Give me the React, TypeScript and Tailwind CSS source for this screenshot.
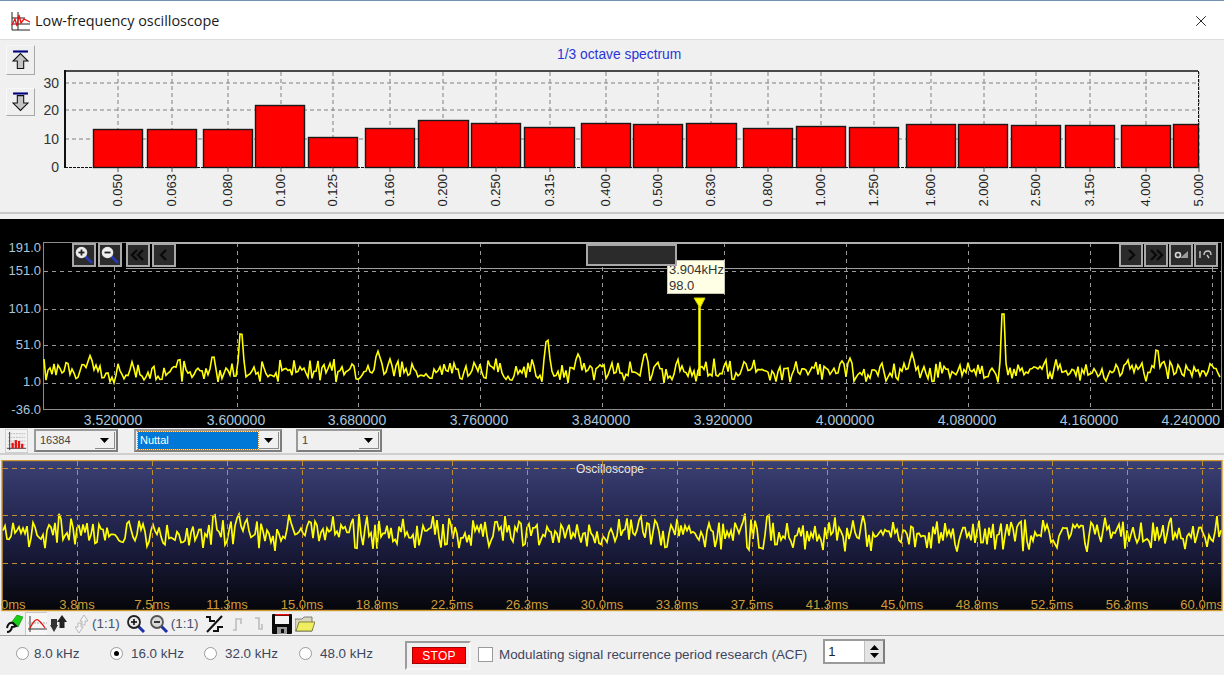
import { X } from "lucide-react"

// deterministic noise so the traces stay put between runs
const rng = (seed: number) => () => {
  seed = (seed + 0x6d2b79f5) | 0
  let t = Math.imul(seed ^ (seed >>> 15), 1 | seed)
  t = (t + Math.imul(t ^ (t >>> 7), 61 | t)) ^ t
  return ((t ^ (t >>> 14)) >>> 0) / 4294967296
}

const trace = (seed: number, x0: number, x1: number, step: number, base: number, amp: number, peaks: [number, number, number][]) => {
  const r = rng(seed)
  const pts: string[] = []
  for (let x = x0; x <= x1; x += step) {
    let y = base + (r() - 0.5) * amp + (r() - 0.5) * amp * 0.7
    for (const [px, h, w] of peaks) {
      const d = Math.max(0, Math.abs(x - px) - step / 2)
      if (d < w) y = Math.min(y, base + 4 - h * (1 - d / w) + (r() - 0.5) * 3)
    }
    pts.push(`${x.toFixed(1)},${y.toFixed(1)}`)
  }
  return pts.join(" ")
}

const bars: [number, number, number, string, number][] = [
  [93, 142, 129, "0.050", 118],
  [147, 196, 129, "0.063", 172],
  [203, 252, 129, "0.080", 228],
  [255, 304, 105, "0.100", 281],
  [308, 357, 137, "0.125", 333],
  [365, 414, 128, "0.160", 390],
  [418, 468, 120, "0.200", 443],
  [471, 520, 123, "0.250", 496],
  [524, 574, 127, "0.315", 550],
  [581, 630, 123, "0.400", 606],
  [633, 682, 124, "0.500", 658],
  [686, 736, 123, "0.630", 711],
  [743, 792, 128, "0.800", 768],
  [796, 845, 126, "1.000", 821],
  [849, 898, 127, "1.250", 874],
  [906, 955, 124, "1.600", 931],
  [958, 1007, 124, "2.000", 984],
  [1011, 1060, 125, "2.500", 1036],
  [1065, 1114, 125, "3.150", 1090],
  [1121, 1170, 125, "4.000", 1146],
  [1173, 1198, 124, "5.000", 1199],
]

const SpectrumChart = () => (
  <svg viewBox="43 40 1181 174" className="w-[1181px] h-[174px] block">
    {[83, 110, 139].map((y) => (
      <line key={y} x1={65} x2={1198} y1={y} y2={y} stroke="#808080" strokeDasharray="4 3" />
    ))}
    {bars.map((b) => (
      <line key={b[3]} x1={b[4]} x2={b[4]} y1={72} y2={167} stroke="#808080" strokeDasharray="4 3" />
    ))}
    {bars.map(([a, b, top, label, tx]) => (
      <g key={label}>
        <rect x={a + 0.5} y={top + 0.5} width={b - a} height={167 - top} fill="#ff0000" stroke="#1a1a1a" strokeWidth={1.4} />
        <line x1={tx} x2={tx} y1={167} y2={172} stroke="#555" />
        <text x={tx + 4} y={174} textAnchor="end" transform={`rotate(-90 ${tx + 4} 174)`} fontSize={13} fill="#222">
          {label}
        </text>
      </g>
    ))}
    <line x1={65} x2={1198} y1={71} y2={71} stroke="#111" strokeWidth={1.5} />
    <line x1={65} x2={65} y1={70} y2={168} stroke="#111" strokeWidth={2} />
    <line x1={65} x2={1198} y1={167.5} y2={167.5} stroke="#111" strokeDasharray="3 1" />
    <line x1={1198.5} x2={1198.5} y1={71} y2={167} stroke="#111" strokeDasharray="3 1" />
    {[
      ["30", 88],
      ["20", 115],
      ["10", 144],
      ["0", 172],
    ].map(([t, y]) => (
      <text key={t} x={59} y={y} textAnchor="end" fontSize={14} fill="#333">
        {t}
      </text>
    ))}
  </svg>
)

const freqGrid = [114, 237, 358, 480, 602, 724, 846, 968, 1090, 1212]
const freqLabels = ["3.520000", "3.600000", "3.680000", "3.760000", "3.840000", "3.920000", "4.000000", "4.080000", "4.160000", "4.240000"]
const ampLabels: [string, number][] = [
  ["191.0", 252],
  ["151.0", 275],
  ["101.0", 313],
  ["51.0", 349],
  ["1.0", 386],
  ["-36.0", 414],
]

const fftTrace = trace(7, 44, 1220, 2, 371, 15, [
  [90, 20, 3],
  [213, 18, 3],
  [241, 42, 3],
  [378, 24, 4],
  [390, 16, 3],
  [547, 34, 4],
  [578, 22, 4],
  [645, 20, 3],
  [912, 22, 3],
  [1003, 61, 2.5],
  [1157, 24, 3],
  [850, 18, 2.5],
])

const FftChart = () => (
  <svg viewBox="0 219 1224 209" className="w-[1224px] h-[209px] block">
    <rect x={0} y={219} width={1224} height={209} fill="#000" />
    {[271, 309, 345, 383].map((y) => (
      <line key={y} x1={44} x2={1221} y1={y + 0.5} y2={y + 0.5} stroke="#9a9a9a" strokeDasharray="4 4" />
    ))}
    {freqGrid.map((x) => (
      <line key={x} x1={x + 0.5} x2={x + 0.5} y1={243} y2={409} stroke="#9a9a9a" strokeDasharray="4 4" />
    ))}
    <rect x={43.5} y={242.5} width={1178} height={167} fill="none" stroke="#8c8c8c" />
    <line x1={126} x2={1218} y1={268.5} y2={268.5} stroke="#a0a0a0" />
    <polyline points={fftTrace} fill="none" stroke="#ffff00" strokeWidth={1.6} />
    <line x1={699.5} x2={699.5} y1={306} y2={376} stroke="#ffff00" strokeWidth={2.5} />
    <polygon points="694,298 705,298 700,308" fill="#ffff00" stroke="#c8c800" />
    {ampLabels.map(([t, y]) => (
      <text key={t} x={41} y={y} textAnchor="end" fontSize={13} fill="#a9c6dc">
        {t}
      </text>
    ))}
    {freqLabels.map((t, i) =>
      i === 9 ? (
        <text key={t} x={1220} y={425} textAnchor="end" fontSize={14} fill="#a9c6dc">
          {t}
        </text>
      ) : (
        <text key={t} x={freqGrid[i] - 1} y={425} textAnchor="middle" fontSize={14} fill="#a9c6dc">
          {t}
        </text>
      ),
    )}
  </svg>
)

const NavBtn = ({ children }: { children: React.ReactNode }) => (
  <div className="w-6 h-6 bg-[#2b2b2b] border-2 border-[#a8a8a8] flex items-center justify-center shrink-0">{children}</div>
)

const Lens = ({ plus }: { plus: boolean }) => (
  <svg width="20" height="20" viewBox="0 0 20 20">
    <line x1="11" y1="11" x2="18" y2="18" stroke="#2438b8" strokeWidth="2.5" />
    <circle cx="7.5" cy="7.5" r="5" fill="#f2f2f2" stroke="#e8e8e8" strokeWidth="1.6" />
    <line x1="4.5" y1="7.5" x2="10.5" y2="7.5" stroke="#222" strokeWidth="1.8" />
    {plus && <line x1="7.5" y1="4.5" x2="7.5" y2="10.5" stroke="#222" strokeWidth="1.8" />}
  </svg>
)

const Chev = ({ dir, double }: { dir: "l" | "r"; double?: boolean }) => (
  <svg width="16" height="14" viewBox="0 0 16 14" fill="none" stroke="#0a0a0a" strokeWidth="2.4">
    {dir === "l" ? (
      <>
        <path d={double ? "M7 2 L2 7 L7 12" : "M10 2 L5 7 L10 12"} />
        {double && <path d="M13 2 L8 7 L13 12" />}
      </>
    ) : (
      <>
        <path d={double ? "M3 2 L8 7 L3 12" : "M6 2 L11 7 L6 12"} />
        {double && <path d="M9 2 L14 7 L9 12" />}
      </>
    )}
  </svg>
)

const NavBand = () => (
  <div className="absolute left-[44px] top-[23px] w-[1177px] h-[26px]">
    <div className="absolute left-[82px] right-[3px] top-0 h-[2px] bg-[#b0b0b0]" />
    <div className="relative flex items-center h-full pl-[28px]">
      <div className="flex gap-[2px]">
        <NavBtn><Lens plus /></NavBtn>
        <NavBtn><Lens plus={false} /></NavBtn>
      </div>
      <div className="flex gap-[2px] ml-[4px]">
        <NavBtn><Chev dir="l" double /></NavBtn>
        <NavBtn><Chev dir="l" /></NavBtn>
      </div>
      <div className="ml-[410px] w-[91px] h-[22px] bg-[#2b2b2b] border-2 border-[#a8a8a8]" />
      <div className="ml-auto flex gap-[1px] mr-[3px]">
        <NavBtn><Chev dir="r" /></NavBtn>
        <NavBtn><Chev dir="r" double /></NavBtn>
        <NavBtn>
          <svg width="16" height="12" viewBox="0 0 16 12" fill="none">
            <circle cx="5" cy="6" r="2.5" stroke="#d8d8d8" strokeWidth="1.6" />
            <path d="M7 9 L15 9 L15 2 Z" fill="#9a9a9a" />
          </svg>
        </NavBtn>
        <NavBtn>
          <svg width="16" height="12" viewBox="0 0 16 12" fill="none" stroke="#c8c8c8" strokeWidth="1.4">
            <path d="M2 2 V9" />
            <path d="M6 6 Q6 2 10 2 Q13 2 13 6" />
            <path d="M9 6 L11 9" />
          </svg>
        </NavBtn>
      </div>
    </div>
  </div>
)

const WinSelect = ({ width, value, selected }: { width: string; value: string; selected?: boolean }) => (
  <div className={`${width} h-[23px] flex items-center bg-[#f0f0f0] border-2 border-[#9a9a9a] border-r-[#7d7d7d] border-b-[#7d7d7d] pr-[1px]`}>
    <div className="flex-1 min-w-0 pl-[2px] h-full py-[1px]">
      <div
        className={
          selected
            ? "h-full bg-[#0078d7] text-white outline-1 outline-dotted outline-[#c87a28] pl-[2px] text-[11px] leading-[17px]"
            : "h-full text-[#444] pl-[2px] text-[11px] leading-[17px]"
        }
      >
        {value}
      </div>
    </div>
    <div className="w-[20px] h-[17px] ml-[1px] bg-[#f0f0f0] border-r border-b border-[#8a8a8a] flex items-center justify-center">
      <svg width="9" height="5" viewBox="0 0 9 5">
        <polygon points="0,0 9,0 4.5,5" fill="#000" />
      </svg>
    </div>
  </div>
)

const ControlsRow = () => (
  <div className="h-[27px] shrink-0 flex items-center pl-[5px] border-b-2 border-[#cfcfcf]">
    <svg width="23" height="24" viewBox="0 0 23 24" className="bg-[#f2f2f2] border border-[#d0d0d0]">
      {[4, 8, 12, 16].map((y) => (
        <line key={y} x1="2" x2="21" y1={y} y2={y} stroke="#b5b5b5" strokeDasharray="2 1" />
      ))}
      <line x1="4" x2="4" y1="2" y2="22" stroke="#333" />
      <line x1="1" x2="22" y1="20" y2="20" stroke="#333" />
      <rect x="6" y="14" width="2.5" height="6" fill="#e81010" />
      <rect x="9.5" y="11" width="2.5" height="9" fill="#e81010" />
      <rect x="13" y="12" width="2.5" height="8" fill="#e81010" />
      <rect x="16.5" y="15" width="2.5" height="5" fill="#e81010" />
    </svg>
    <div className="ml-[6px]"><WinSelect width="w-[84px]" value="16384" /></div>
    <div className="ml-[16px]"><WinSelect width="w-[148px]" value="Nuttal" selected /></div>
    <div className="ml-[14px]"><WinSelect width="w-[86px]" value="1" /></div>
  </div>
)

const msLabels = ["0ms", "3.8ms", "7.5ms", "11.3ms", "15.0ms", "18.8ms", "22.5ms", "26.3ms", "30.0ms", "33.8ms", "37.5ms", "41.3ms", "45.0ms", "48.8ms", "52.5ms", "56.3ms", "60.0ms"]
const scopeTrace = trace(21, 3, 1221, 2, 533, 24, [
  [214, 21, 1.5],
  [655, 17, 1.5],
])

const ScopeChart = () => (
  <svg viewBox="0 460 1224 152" className="w-[1224px] h-[152px] block">
    <defs>
      <linearGradient id="scopeBg" x1="0" y1="0" x2="0" y2="1">
        <stop offset="0" stopColor="#3b4074" />
        <stop offset="0.5" stopColor="#1e2046" />
        <stop offset="1" stopColor="#05060a" />
      </linearGradient>
    </defs>
    <rect x={2} y={460.5} width={1220} height={150} fill="url(#scopeBg)" stroke="#d09a30" strokeWidth={1.4} />
    <polyline points={scopeTrace} fill="none" stroke="#ffff00" strokeWidth={1.7} />
    <text x={610} y={473} textAnchor="middle" fontSize={12} fill="#e8e8e8">
      Oscilloscope
    </text>
    {msLabels.map((t, i) => (
      <text
        key={t}
        x={i === 0 ? 1 : i === 16 ? 1223 : 2 + i * 75}
        y={609}
        textAnchor={i === 0 ? "start" : i === 16 ? "end" : "middle"}
        fontSize={13}
        fill="#cf9c38"
      >
        {t}
      </text>
    ))}
    {[468, 515, 563].map((y) => (
      <line key={y} x1={3} x2={1221} y1={y + 0.5} y2={y + 0.5} stroke="#c08e34" strokeDasharray="5 4" />
    ))}
    {msLabels.slice(1).map((t, i) => (
      <line key={t} x1={77.5 + i * 75} x2={77.5 + i * 75} y1={461} y2={610} stroke="#c08e34" strokeDasharray="5 4" />
    ))}
  </svg>
)

const Ratio = ({ ml }: { ml: string }) => <span className={`${ml} text-[13.5px] text-[#46506e] leading-none`}>(1:1)</span>

const ZoomIcon = ({ plus, ml }: { plus: boolean; ml: string }) => (
  <svg width="20" height="20" viewBox="0 0 20 20" className={ml}>
    <line x1="12" y1="12" x2="18" y2="18" stroke="#1c2fa8" strokeWidth="3" />
    <circle cx="8" cy="8" r="6" fill={plus ? "#e8e8e8" : "#d8d8d8"} stroke={plus ? "#222" : "#555"} strokeWidth="1.8" />
    <line x1="5" y1="8" x2="11" y2="8" stroke="#111" strokeWidth="1.6" />
    {plus && <line x1="8" y1="5" x2="8" y2="11" stroke="#111" strokeWidth="1.6" />}
  </svg>
)

const Toolbar = () => (
  <div className="h-[24px] shrink-0 flex items-center pl-[6px] border-b border-[#a0a0a0]">
    {/* brush */}
    <svg width="17" height="18" viewBox="0 0 17 18">
      <path d="M5 8 L11 0 L17 2 L12 12 Z" fill="#18d018" stroke="#0a7a0a" strokeWidth="0.6" />
      <path d="M1 13 Q2 7 7 8 L10 11 Q8 12 6 12 Q5 17 1 17" fill="none" stroke="#111" strokeWidth="2" />
    </svg>
    {/* spectrum toggle */}
    <div className="w-[22px] h-[23px] ml-[2px] border-t border-l border-[#c8c8c8] bg-[#f6f6f6] flex items-center justify-center">
      <svg width="20" height="18" viewBox="0 0 20 18" fill="none">
        <line x1="3" x2="3" y1="1" y2="17" stroke="#333" />
        <line x1="1" x2="20" y1="14" y2="14" stroke="#333" />
        <line x1="1" x2="20" y1="8" y2="8" stroke="#aaa" strokeDasharray="2 1" />
        <path d="M3 13 Q8 3 11 5 Q14 7 18 13" stroke="#e81010" strokeWidth="1.3" />
      </svg>
    </div>
    {/* y axis arrows */}
    <svg width="17" height="20" viewBox="0 0 17 20" className="ml-[3px]" fill="#222">
      <path d="M1 11 H7 V5 H1 Z M4 18 L0 11 H8 Z" fill="#333" />
      <path d="M12 1 L17 8 H14.5 V14 H9.5 V8 H7 Z" />
    </svg>
    <svg width="13" height="20" viewBox="0 0 13 20" className="ml-[8px]" fill="#f5f5f5" stroke="#b8b8b8">
      <path d="M9 1 L13 7 H10 V11 H7 V7 H5 Z" />
      <path d="M4 19 L0 13 H3 V9 H6 V13 H8 Z" />
    </svg>
    <Ratio ml="ml-[4px]" />
    <ZoomIcon plus ml="ml-[6px]" />
    <ZoomIcon plus={false} ml="ml-[3px]" />
    <Ratio ml="ml-[2px]" />
    <svg width="19" height="20" viewBox="0 0 19 20" className="ml-[6px]" fill="none" stroke="#111">
      <path d="M1 3 H5 V7 H10" strokeWidth="2" />
      <path d="M8 17 H13 V13 H18" strokeWidth="2" />
      <line x1="17" y1="2" x2="2" y2="18" strokeWidth="2" />
    </svg>
    <svg width="10" height="14" viewBox="0 0 10 14" className="ml-[8px]" fill="none" stroke="#bdbdbd" strokeWidth="1.6">
      <path d="M1 13 H4 V2 H9 V7" />
    </svg>
    <svg width="9" height="14" viewBox="0 0 9 14" className="ml-[12px]" fill="none" stroke="#bdbdbd" strokeWidth="1.6">
      <path d="M1 1 H5 V12 H8 V7" />
    </svg>
    <svg width="20" height="20" viewBox="0 0 20 20" className="ml-[9px]">
      <rect x="0" y="0" width="20" height="20" rx="1" fill="#0a0a0a" />
      <rect x="3" y="0" width="14" height="1.5" fill="#e81010" />
      <rect x="3" y="2" width="14" height="8" fill="#f4f4f4" />
      <rect x="5" y="13" width="10" height="7" fill="#9a9a9a" />
      <rect x="9" y="15" width="3" height="4" fill="#0a0a0a" />
    </svg>
    <svg width="20" height="16" viewBox="0 0 20 16" className="ml-[3px]">
      <path d="M0 3 H7 L9 1 H17 V15 H0 Z" fill="#d8d8b8" stroke="#666" strokeWidth="0.8" />
      <path d="M1 15 L4 6 H20 L17 15 Z" fill="#eeee60" stroke="#6a6a30" strokeWidth="0.8" />
    </svg>
  </div>
)

const Radio = ({ label, checked, width, gap = "ml-[8px]" }: { label: string; checked?: boolean; width: string; gap?: string }) => (
  <div className={`${width} flex items-center shrink-0 mb-[3px]`}>
    <div className="w-[13px] h-[13px] rounded-full bg-white border border-[#9a9a9a] flex items-center justify-center">
      {checked && <div className="w-[5px] h-[5px] rounded-full bg-black" />}
    </div>
    <span className={`${gap} text-[13.4px] text-[#3c4660] whitespace-nowrap`}>{label}</span>
  </div>
)

const BottomBar = () => (
  <div className="flex-1 flex items-center pl-[16px]">
    <Radio label="8.0 kHz" width="w-[94px]" gap="ml-[5px]" />
    <Radio label="16.0 kHz" checked width="w-[94px]" />
    <Radio label="32.0 kHz" width="w-[95px]" />
    <Radio label="48.0 kHz" width="w-[106px]" />
    <div className="w-[66px] h-[29px] border-2 border-[#9c9c9c] border-r-[#f8f8f8] border-b-[#f8f8f8] p-[4px] pl-[5px] pr-[3px]">
      <div className="h-full bg-[#ff0000] border border-[#a00000] text-white text-[12px] tracking-wide flex items-center justify-center leading-none">
        STOP
      </div>
    </div>
    <div className="w-[15px] h-[15px] ml-[7px] mb-[2px] bg-white border border-[#9a9a9a]" />
    <span className="ml-[6px] mb-[1px] text-[13.4px] text-[#3c4660] whitespace-nowrap">Modulating signal recurrence period research (ACF)</span>
    <div className="ml-[16px] mb-[8px] w-[62px] h-[25px] bg-white border-2 border-[#9a9a9a] border-r-[#7d7d7d] flex items-center">
      <span className="flex-1 pl-[3px] text-[13px] text-[#222]">1</span>
      <div className="w-[19px] h-full bg-[#e4e4e4] border-l border-[#c0c0c0] flex flex-col items-center justify-center gap-[3px]">
        <svg width="9" height="5" viewBox="0 0 9 5"><polygon points="4.5,0 9,5 0,5" fill="#000" /></svg>
        <svg width="9" height="5" viewBox="0 0 9 5"><polygon points="0,0 9,0 4.5,5" fill="#000" /></svg>
      </div>
    </div>
  </div>
)

const UpDownButton = ({ up, height }: { up: boolean; height: string }) => (
  <div className={`w-[29px] ${height} bg-[#efefef] border border-[#f8f8f8] border-r-[#a8a8a8] border-b-[#a8a8a8] flex items-center justify-center`}>
    <svg width="17" height="20" viewBox="0 0 16 18">
      <line x1="1" x2="15" y1="1" y2="1" stroke="#000080" strokeWidth="2" />
      {up ? (
        <path d="M8 3 L15 10 H11 V17 H5 V10 H1 Z" fill="#c4c4c4" stroke="#111" />
      ) : (
        <path d="M5 3 H11 V10 H15 L8 17 L1 10 H5 Z" fill="#c4c4c4" stroke="#111" />
      )}
    </svg>
  </div>
)

const TitleBar = () => (
  <div className="h-[39px] shrink-0 bg-white flex items-center pl-[11px] pr-[14px] pt-[2px] border-b border-[#dcdcdc]">
    <svg width="20" height="20" viewBox="0 0 20 20" fill="none">
      <path d="M1 1 V19 H19 M7 1 V19 M1 13 H19 M1 7 H14" stroke="#222" />
      <path d="M1 14 L4 8 L6 15 L8 4 L10 12 L13 8 L19 11" stroke="#e81010" strokeWidth="1.3" />
    </svg>
    <span className="ml-[4px] text-[14.4px] text-[#1a1a1a] font-['Open_Sans',sans-serif]">Low-frequency oscilloscope</span>
    <X className="ml-auto text-[#222]" size={18} strokeWidth={1.3} />
  </div>
)

export default function App() {
  return (
    <div className="w-[1224px] h-[675px] overflow-hidden flex flex-col bg-[#f0f0f0] border-t border-[#7391b3] font-['Liberation_Sans',sans-serif]">
      <TitleBar />
      <div className="h-[174px] shrink-0 flex border-b-2 border-[#c8c8c8]">
        <div className="w-[43px] flex flex-col pl-[6px] pt-[5px] gap-[13px]">
          <UpDownButton up height="h-[30px]" />
          <UpDownButton up={false} height="h-[28px]" />
        </div>
        <div className="relative">
          <SpectrumChart />
          <span className="absolute left-[514px] top-[8px] text-[13.8px] text-[#2a35d8] leading-[14px] whitespace-nowrap">1/3 octave spectrum</span>
        </div>
      </div>
      <div className="h-[5px] shrink-0" />
      <div className="relative h-[209px] shrink-0">
        <FftChart />
        <div className="absolute left-[667px] top-[41px] w-[58px] h-[34px] bg-[#ffffe6] border border-[#c8c8b0] text-[13px] leading-[16px] text-[#333] pl-[1px] pt-[1px]">
          3.904kHz
          <br />
          98.0
        </div>
        <NavBand />
      </div>
      <ControlsRow />
      <div className="h-[5px] shrink-0 bg-[#f0f0f0]" />
      <ScopeChart />
      <Toolbar />
      <BottomBar />
    </div>
  )
}
